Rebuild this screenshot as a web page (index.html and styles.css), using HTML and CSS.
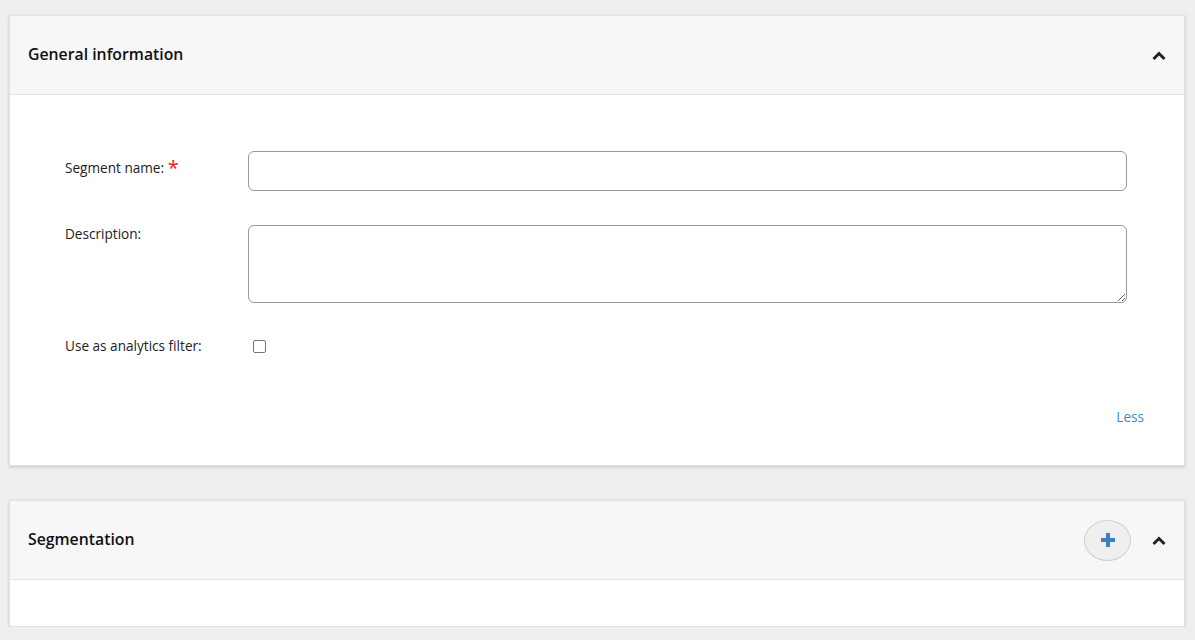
FILE: index.html
```html
<!DOCTYPE html>
<html>
<head>
<meta charset="utf-8">
<link rel="stylesheet" href="styles.css">
</head>
<body>
<div class="page">
  <section class="card">
    <header class="card-head">
      <h2 class="card-title">General information</h2>
      <div class="head-actions">
        <span class="chevron"><svg width="14" height="10" viewBox="0 0 14 10"><path d="M1.5 8 L7 2.5 L12.5 8" fill="none" stroke="#222" stroke-width="3"/></svg></span>
      </div>
    </header>
    <div class="card-body">
      <div class="form-row">
        <label class="form-label label-input">Segment name: <span class="req">*</span></label>
        <div class="form-field"><input class="text-input" type="text"></div>
      </div>
      <div class="form-row">
        <label class="form-label">Description:</label>
        <div class="form-field"><textarea class="text-area"></textarea></div>
      </div>
      <div class="form-row check-row">
        <label class="form-label">Use as analytics filter:</label>
        <div class="form-field"><span class="checkbox"></span></div>
      </div>
      <div class="less-row"><a class="less-link">Less</a></div>
    </div>
  </section>
  <section class="card card-seg">
    <header class="card-head">
      <h2 class="card-title">Segmentation</h2>
      <div class="head-actions">
        <button class="add-btn"><svg width="16" height="16" viewBox="0 0 16 16"><path d="M8 1 V15 M1 8 H15" stroke="#3f7fc1" stroke-width="4"/></svg></button>
        <span class="chevron"><svg width="14" height="10" viewBox="0 0 14 10"><path d="M1.5 8 L7 2.5 L12.5 8" fill="none" stroke="#222" stroke-width="3"/></svg></span>
      </div>
    </header>
    <div class="seg-body"></div>
  </section>
</div>
</body>
</html>
```
FILE: styles.css
```css
html, body {
  margin: 0;
  padding: 0;
  background: #efefef;
  font-family: "Open Sans", "Liberation Sans", sans-serif;
  color: #222;
}
.page {
  padding: 15px 10px 0 9px;
  display: flex;
  flex-direction: column;
  gap: 34px;
}
.card {
  background: #fff;
  border: 1px solid #e2e2e2;
  box-shadow: 0 1px 3px rgba(0,0,0,0.18);
}
.card-head {
  height: 78px;
  background: #f7f7f7;
  border-bottom: 1px solid #e2e2e2;
  display: flex;
  align-items: center;
  justify-content: space-between;
  padding: 0 18px 0 18px;
}
.card-title {
  margin: 0;
  font-size: 15.8px;
  font-weight: 600;
  color: #111;
  margin-top: -3px;
}
.head-actions {
  display: flex;
  align-items: center;
  gap: 21px;
}
.chevron {
  display: flex;
  width: 14px;
  height: 10px;
  margin-top: 2px;
}
.add-btn {
  width: 47px;
  height: 41px;
  border-radius: 50%;
  background: #efefef;
  border: 1px solid #cfcfcf;
  display: flex;
  align-items: center;
  justify-content: center;
  padding: 0;
}
.card-body {
  padding: 56px 40px 39px 55px;
}
.form-row {
  display: flex;
  margin-bottom: 34px;
}
.form-label {
  width: 183px;
  flex: none;
  font-size: 13.6px;
  line-height: 18px;
  color: #222;
}
.label-input {
  padding-top: 8px;
}
.req {
  color: #e02020;
  font-size: 20px;
  line-height: 10px;
  vertical-align: -2px;
}
.form-field {
  flex: 1;
  padding-right: 17px;
}
.text-input {
  display: block;
  width: 100%;
  box-sizing: border-box;
  height: 40px;
  border: 1px solid #9a9a9a;
  border-radius: 6px;
  margin: 0;
}
.text-area {
  display: block;
  width: 100%;
  box-sizing: border-box;
  height: 78px;
  border: 1px solid #9a9a9a;
  border-radius: 6px;
  margin: 0;
  resize: vertical;
}
.check-row {
  margin-bottom: 0;
  margin-top: 1px;
}
.checkbox {
  display: block;
  width: 11px;
  height: 11px;
  border: 1px solid #767676;
  border-radius: 2px;
  margin: 3px 0 0 5px;
}
.less-row {
  display: flex;
  justify-content: flex-end;
  margin-top: 53px;
  line-height: 18px;
}
.less-link {
  font-size: 13.6px;
  color: #3a8fc6;
}
.seg-body {
  height: 46px;
}
```
